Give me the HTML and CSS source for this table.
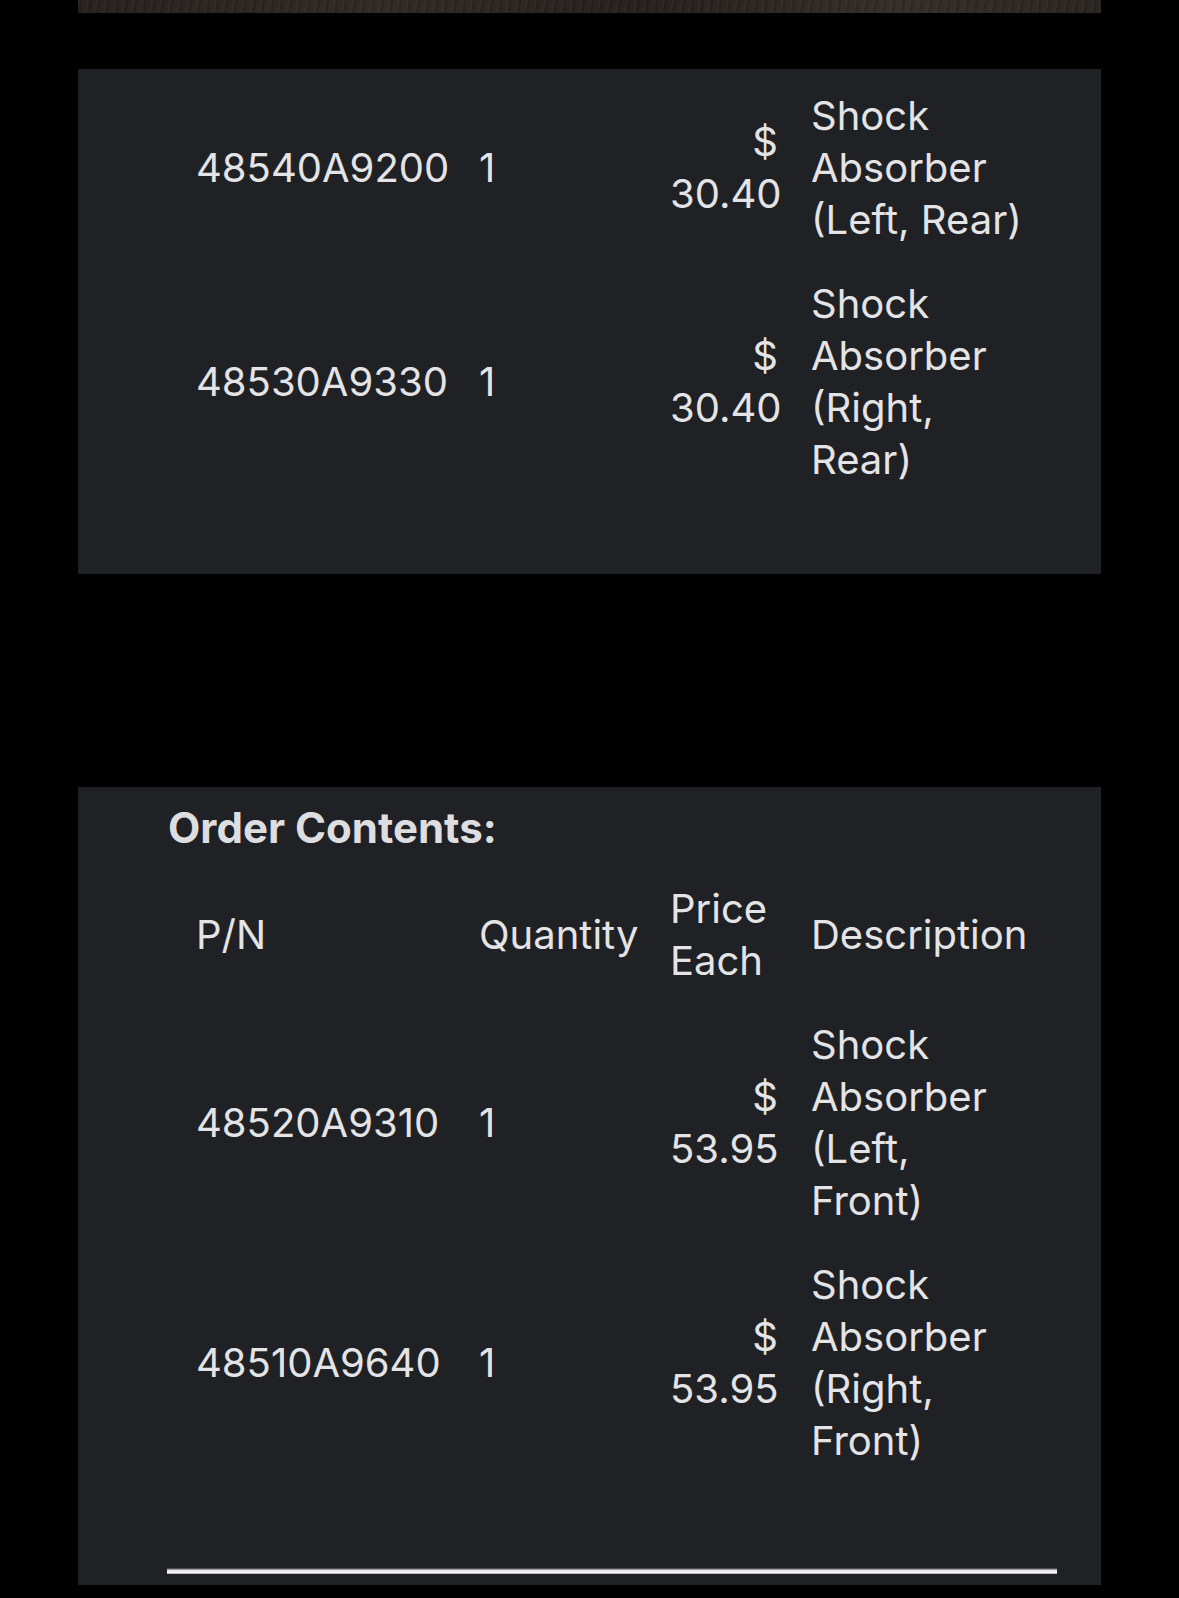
FILE: index.html
```html
<!DOCTYPE html>
<html lang="en">
<head>
<meta charset="utf-8">
<title>Order Contents</title>
<link rel="stylesheet" href="styles.css">
</head>
<body>
<div class="photo"></div>

<section class="card card-first">
  <table class="parts">
    <colgroup>
      <col class="c-pn"><col class="c-qty"><col class="c-price"><col class="c-desc">
    </colgroup>
    <tbody>
      <tr>
        <td>48540A9200</td>
        <td>1</td>
        <td class="price">$ 30.40</td>
        <td class="desc">Shock Absorber (Left, Rear)</td>
      </tr>
      <tr>
        <td>48530A9330</td>
        <td>1</td>
        <td class="price">$ 30.40</td>
        <td class="desc">Shock Absorber (Right, Rear)</td>
      </tr>
    </tbody>
  </table>
</section>

<section class="card card-second">
  <h2 class="card-title">Order Contents:</h2>
  <table class="parts">
    <colgroup>
      <col class="c-pn"><col class="c-qty"><col class="c-price"><col class="c-desc">
    </colgroup>
    <thead>
      <tr>
        <th>P/N</th>
        <th>Quantity</th>
        <th class="price-head">Price Each</th>
        <th class="desc">Description</th>
      </tr>
    </thead>
    <tbody>
      <tr>
        <td>48520A9310</td>
        <td>1</td>
        <td class="price">$ 53.95</td>
        <td class="desc">Shock Absorber (Left, Front)</td>
      </tr>
      <tr>
        <td>48510A9640</td>
        <td>1</td>
        <td class="price">$ 53.95</td>
        <td class="desc">Shock Absorber (Right, Front)</td>
      </tr>
    </tbody>
  </table>
  <div class="rule"></div>
</section>
</body>
</html>
```

FILE: styles.css
```css
html, body {
  margin: 0;
  padding: 0;
  background: #000;
}

body {
  font-family: Inter, "Noto Sans", "Liberation Sans", sans-serif;
  color: #e4e4e6;
  height: 1598px;
  overflow: hidden;
}

.photo {
  height: 13px;
  margin: 0 78px;
  background:
    repeating-linear-gradient(100deg, rgba(255,255,255,0.03) 0 2px, rgba(0,0,0,0.06) 2px 5px, rgba(255,255,255,0.015) 5px 9px),
    linear-gradient(90deg, #26211e 0%, #2f2925 30%, #25201d 55%, #332c28 80%, #2a2420 100%);
}

.card {
  background: #202124;
  margin: 0 78px;
  padding: 0 44px 0 90px;
}

.card-first {
  margin-top: 56px;
  padding-top: 4px;
  padding-bottom: 71px;
}

.card-second {
  margin-top: 213px;
  padding-top: 16px;
  padding-bottom: 11px;
}

.card-title {
  margin: 0 0 13px;
  font-size: 42px;
  line-height: 50px;
  font-weight: 700;
  color: #dedee0;
}

.parts {
  table-layout: fixed;
  border-collapse: separate;
  border-spacing: 0 2px;
  margin-left: 12px;
  width: 864px;
  font-size: 40px;
  line-height: 52px;
}

.c-pn { width: 283px; }
.c-qty { width: 191px; }
.c-price { width: 140px; }
.c-desc { width: 250px; }

.parts td,
.parts th {
  padding: 15px 16px;
  vertical-align: middle;
  text-align: left;
  font-weight: 400;
}

.parts .price {
  text-align: right;
}

.parts .desc {
  padding-left: 17px;
}

.rule {
  height: 6px;
  margin: 84px 0 0 -1px;
  width: 890px;
  background: linear-gradient(#4d4d4f 0 1px, #9a9a9c 1px 2px, #ececec 2px 4px, #f6f6f6 4px 5px, #bdbdbd 5px 6px);
}
```
